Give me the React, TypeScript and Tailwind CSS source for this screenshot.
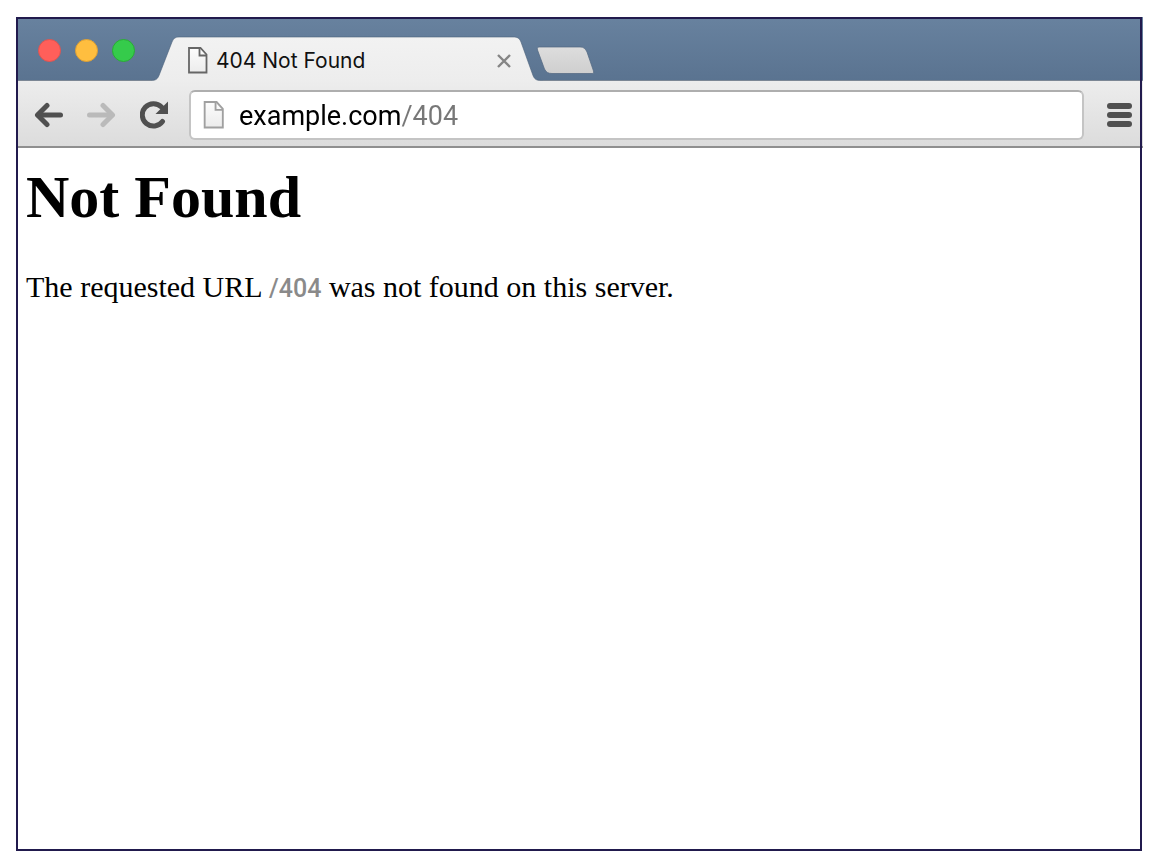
import { useState } from "react";

function PageIcon({ className, stroke }: { className: string; stroke: string }) {
  return (
    <svg viewBox="0 0 20 27" className={className} fill="none" stroke={stroke} strokeWidth="1.800" aria-hidden="true">
      <defs>
        <linearGradient id="paper" x1="0" y1="0" x2="0" y2="1">
          <stop offset="0" stopColor="#fcfcfc" />
          <stop offset="1" stopColor="#ececec" />
        </linearGradient>
      </defs>
      <path d="M1 1H12.500L18.500 7.500V25.500H1Z" fill="url(#paper)" />
      <path d="M11.500 1V8.500H18.500" />
    </svg>
  );
}

function ArrowIcon({ className }: { className: string }) {
  return (
    <svg viewBox="0 0 29 26" className={className} fill="none" stroke="currentColor" strokeWidth="5" strokeLinecap="round" aria-hidden="true">
      <path d="M4 13H26.500" />
      <path d="M13 3.500L3.500 13L13 22.500" strokeLinejoin="round" />
    </svg>
  );
}

function ReloadIcon() {
  return (
    <svg viewBox="0 0 29 29" className="h-[29px] w-[29px]" fill="none" aria-hidden="true">
      <path d="M22.500 21.500A11.200 11.200 0 1 1 21.500 7" stroke="#505050" strokeWidth="5" strokeLinecap="round" />
      <path d="M28 1.500V14H15.500Z" fill="#505050" />
    </svg>
  );
}

function TabShape() {
  return (
    <svg viewBox="0 0 392 45" preserveAspectRatio="none" className="absolute inset-0 h-full w-full" aria-hidden="true">
      <defs>
        <linearGradient id="tab" x1="0" y1="0" x2="0" y2="1">
          <stop offset="0" stopColor="#f2f2f2" />
          <stop offset="1" stopColor="#ededed" />
        </linearGradient>
      </defs>
      <path
        d="M0 45V44.500C5 44.500 6.500 43 8 39.500L21 6C22.500 2.500 24 1 28 1H362C367 1 368.500 2.500 370 6L382 39.500C383.500 43 385 44.500 390 44.500H392V45Z"
        fill="url(#tab)"
      />
      <path
        d="M0 44.500C5 44.500 6.500 43 8 39.500L21 6C22.500 2.500 24 1 28 1H362C367 1 368.500 2.500 370 6L382 39.500C383.500 43 385 44.500 390 44.500H392"
        fill="none"
        stroke="#4b607a"
        strokeOpacity="0.6"
      />
    </svg>
  );
}

function TitleBar() {
  return (
    <div className="flex h-16 items-end bg-linear-to-b from-[#68829f] to-[#5a7390] shadow-[inset_0_-1px_0_#7c8795]">
      <div className="flex items-center gap-[14px] self-start pt-[22px] pl-[22px]">
        <button aria-label="Close window" className="h-[23px] w-[23px] rounded-full border border-[#df5450] bg-[#ff5f5a]" />
        <button aria-label="Minimize window" className="h-[23px] w-[23px] rounded-full border border-[#dea034] bg-[#ffbe3f]" />
        <button aria-label="Zoom window" className="h-[23px] w-[23px] rounded-full border border-[#2aab35] bg-[#35cb4b]" />
      </div>
      <div className="relative ml-4 flex h-[45px] w-[392px] items-center pt-1 pr-8 pl-[37px]">
        <TabShape />
        <PageIcon className="relative h-[27px] w-5" stroke="#666666" />
        <span className="relative ml-2 flex-1 font-['Inter',sans-serif] text-[21px] leading-6 text-[#111111]">404 Not Found</span>
        <button aria-label="Close tab" className="relative">
          <svg viewBox="0 0 14 14" className="h-[14px] w-[14px]" stroke="#858585" strokeWidth="2.400" aria-hidden="true">
            <path d="M1 1L13 13M13 1L1 13" />
          </svg>
        </button>
      </div>
      <button aria-label="New tab" className="mb-[6px] -ml-[7px]">
        <svg viewBox="0 0 59 29" className="h-[29px] w-[59px]" aria-hidden="true">
          <defs>
            <linearGradient id="newtab" x1="0" y1="0" x2="0" y2="1">
              <stop offset="0" stopColor="#dddddd" />
              <stop offset="1" stopColor="#cfcfcf" />
            </linearGradient>
          </defs>
          <path
            d="M3 1H44C48 1 49.500 3 51 6L57.500 25C58 27 57.500 27.500 56 27.500H16C12 27.500 10 26 8.500 23L1.500 4C1 2 1.500 1 3 1Z"
            fill="url(#newtab)"
            stroke="#50657f"
            strokeOpacity="0.7"
          />
        </svg>
      </button>
    </div>
  );
}

function Toolbar() {
  const [url, setUrl] = useState("example.com/404");
  return (
    <div className="flex h-[67px] items-center border-b-2 border-b-[#8f8f8f] bg-linear-to-b from-[#ededed] to-[#dcdcdc] pt-[2px] pr-[11px] pl-[18px]">
      <button aria-label="Back" className="text-[#505050]">
        <ArrowIcon className="h-[26px] w-[29px]" />
      </button>
      <button aria-label="Forward" className="ml-6 text-[#bababa]">
        <ArrowIcon className="h-[26px] w-[29px] rotate-180" />
      </button>
      <button aria-label="Reload" className="ml-6">
        <ReloadIcon />
      </button>
      <label className="ml-5 flex h-[50px] min-w-0 flex-1 items-center gap-[14px] rounded-md border-2 border-[#c4c4c4] border-t-[#aeaeae] bg-white pl-3">
        <PageIcon className="h-7 w-[22px] shrink-0" stroke="#a0a0a0" />
        <input
          type="text"
          aria-label="Address"
          value={url}
          onChange={(e) => setUrl(e.target.value)}
          className="h-10 min-w-0 flex-1 bg-linear-to-r from-black from-[162px] to-[#777777] to-[162px] bg-clip-text pt-1 font-['Roboto',sans-serif] text-[27px] text-transparent caret-black outline-none"
        />
      </label>
      <button aria-label="Menu" className="ml-[23px] flex flex-col gap-[3px]">
        <span className="h-[6px] w-[25px] rounded-sm bg-[#505050]" />
        <span className="h-[6px] w-[25px] rounded-sm bg-[#505050]" />
        <span className="h-[6px] w-[25px] rounded-sm bg-[#505050]" />
      </button>
    </div>
  );
}

export default function App() {
  return (
    <div className="flex min-h-screen flex-col bg-white py-[17px] pr-[15px] pl-4">
      <div className="relative flex flex-1 flex-col">
        <TitleBar />
        <Toolbar />
        <main className="flex-1 px-[10px] pt-4 font-['Liberation_Serif',serif] text-black">
          <h1 className="text-[60px] leading-[66px] font-bold">Not Found</h1>
          <p className="mt-10 text-[30px] leading-[34px]">
            The requested URL <span className="font-['Roboto',sans-serif] text-[25px] font-medium text-[#8a8a8a]">/404</span> was not found on this server.
          </p>
        </main>
        <div className="pointer-events-none absolute inset-y-0 right-[1px] left-0 border-2 border-[#211a4d]" />
      </div>
    </div>
  );
}
